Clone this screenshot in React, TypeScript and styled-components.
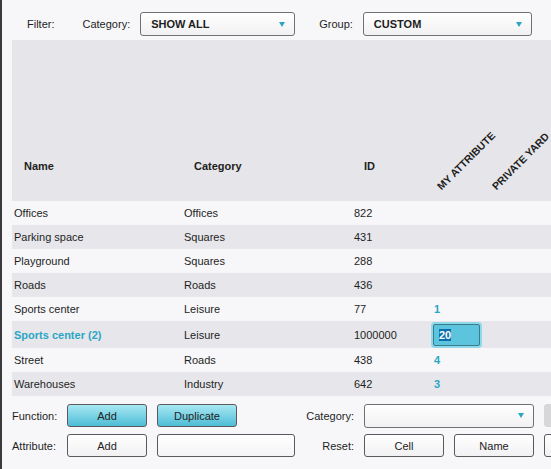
import styled, { createGlobalStyle } from "styled-components";

const GlobalStyle = createGlobalStyle`
  html, body {
    margin: 0;
    padding: 0;
    background: #f7f7f9;
    overflow: hidden;
  }
  body {
    font-family: "Liberation Sans", Arial, sans-serif;
    font-size: 11px;
    color: #1e1e1e;
  }
`;

const TEAL = "#2aa6c4";

const Frame = styled.div`
  width: 551px;
  height: 469px;
  box-sizing: border-box;
  border-left: 2px solid #3a3a3c;
  overflow: hidden;
  background: #f7f7f9;
`;

const TopBar = styled.div`
  height: 40px;
  box-sizing: border-box;
  padding: 8px 0 0 25px;
  display: flex;
  align-items: center;
`;

const Label = styled.span<{ $gap?: number; $lead?: number }>`
  margin-left: ${(p) => p.$lead ?? 0}px;
  margin-right: ${(p) => p.$gap ?? 10}px;
  white-space: nowrap;
`;

const Select = styled.div<{ $width: number }>`
  width: ${(p) => p.$width}px;
  height: 24px;
  box-sizing: border-box;
  border: 1px solid #707074;
  border-radius: 3px;
  background: linear-gradient(#ffffff, #f1f1f3);
  display: flex;
  align-items: center;
  justify-content: space-between;
  padding: 0 9px 0 10px;
  font-weight: bold;
  font-size: 11px;
`;

const Arrow = styled.span`
  width: 0;
  height: 0;
  border-left: 3.5px solid transparent;
  border-right: 3.5px solid transparent;
  border-top: 5px solid ${TEAL};
`;

const Table = styled.div`
  margin-left: 10px;
`;

const COLUMNS = "170px 170px 80px 55px 1fr";

const HeaderRow = styled.div`
  height: 161px;
  display: grid;
  grid-template-columns: ${COLUMNS};
  align-items: end;
  background: #e6e6ea;
`;

const HeadCell = styled.div`
  padding: 0 0 28px 12px;
  font-weight: bold;
  line-height: 13px;
`;

const SlantCell = styled.div`
  padding: 0 0 9px 11px;
  height: 12px;
`;

const SlantLabel = styled.span`
  display: block;
  width: 100px;
  font-size: 10.5px;
  font-weight: bold;
  line-height: 12px;
  white-space: nowrap;
  transform-origin: left bottom;
  transform: rotate(-45deg);
`;

const Row = styled.div<{ $shaded: boolean; $tall?: boolean }>`
  height: ${(p) => (p.$tall ? 27 : 24)}px;
  display: grid;
  grid-template-columns: ${COLUMNS};
  align-items: center;
  background: ${(p) => (p.$shaded ? "#e7e7eb" : "#f7f7f9")};
`;

const Cell = styled.div<{ $accent?: boolean }>`
  padding-left: 2px;
  white-space: nowrap;
  color: ${(p) => (p.$accent ? TEAL : "#1e1e1e")};
  font-weight: ${(p) => (p.$accent ? "bold" : "normal")};
`;

const EditBox = styled.div`
  width: 47px;
  height: 22px;
  margin-left: 1px;
  box-sizing: border-box;
  border: 1px solid #3b7c8c;
  border-radius: 2px;
  background: #5cc4dc;
  box-shadow: 0 0 0 2px #8dd8e9;
  display: flex;
  align-items: center;
  padding-left: 5px;
`;

const Selected = styled.span`
  background: #0b6fae;
  color: #ffffff;
  font-weight: bold;
  line-height: 12px;
`;

const Controls = styled.div`
  display: grid;
  grid-template-columns: 45px 80px 138px 49px 80px 80px 80px;
  grid-auto-rows: 23px;
  column-gap: 10px;
  row-gap: 7px;
  padding: 8px 0 0 10px;
  align-items: center;
`;

const SideLabel = styled.span<{ $right?: boolean }>`
  white-space: nowrap;
  text-align: ${(p) => (p.$right ? "right" : "left")};
`;

const Button = styled.div<{ $variant?: "teal" | "plain" | "disabled" }>`
  width: 80px;
  height: 23px;
  box-sizing: border-box;
  border-radius: 3px;
  display: flex;
  align-items: center;
  justify-content: center;
  color: #222;
  border: 1px solid
    ${(p) => (p.$variant === "disabled" ? "#d6d6d9" : "#5a5a5e")};
  background: ${(p) =>
    p.$variant === "teal"
      ? "linear-gradient(#a9e8f3, #4dbdd6)"
      : p.$variant === "disabled"
      ? "#d7d7da"
      : "linear-gradient(#ffffff, #f1f1f3)"};
`;

const TextField = styled.div`
  width: 138px;
  height: 23px;
  box-sizing: border-box;
  border: 1px solid #5a5a5e;
  border-radius: 3px;
  background: linear-gradient(#ffffff, #f4f4f6);
`;

const WideSelect = styled(Select)`
  grid-column: span 2;
`;

type Item = { name: string; category: string; id: string; value?: string; editing?: boolean };

const items: Item[] = [
  { name: "Offices", category: "Offices", id: "822" },
  { name: "Parking space", category: "Squares", id: "431" },
  { name: "Playground", category: "Squares", id: "288" },
  { name: "Roads", category: "Roads", id: "436" },
  { name: "Sports center", category: "Leisure", id: "77", value: "1" },
  { name: "Sports center (2)", category: "Leisure", id: "1000000", value: "20", editing: true },
  { name: "Street", category: "Roads", id: "438", value: "4" },
  { name: "Warehouses", category: "Industry", id: "642", value: "3" },
];

export default function App() {
  return (
    <Frame>
      <GlobalStyle />
      <TopBar>
        <Label $gap={28}>Filter:</Label>
        <Label>Category:</Label>
        <Select $width={155}>
          SHOW ALL
          <Arrow />
        </Select>
        <Label $lead={24}>Group:</Label>
        <Select $width={169}>
          CUSTOM
          <Arrow />
        </Select>
      </TopBar>

      <Table>
        <HeaderRow>
          <HeadCell>Name</HeadCell>
          <HeadCell>Category</HeadCell>
          <HeadCell>ID</HeadCell>
          <SlantCell>
            <SlantLabel>MY ATTRIBUTE</SlantLabel>
          </SlantCell>
          <SlantCell>
            <SlantLabel>PRIVATE YARD</SlantLabel>
          </SlantCell>
        </HeaderRow>
        {items.map((item, i) => (
          <Row key={item.name} $shaded={i % 2 === 1} $tall={item.editing}>
            <Cell $accent={item.editing}>{item.name}</Cell>
            <Cell>{item.category}</Cell>
            <Cell>{item.id}</Cell>
            {item.editing ? (
              <EditBox>
                <Selected>{item.value}</Selected>
              </EditBox>
            ) : (
              <Cell $accent>{item.value}</Cell>
            )}
            <Cell />
          </Row>
        ))}
      </Table>

      <Controls>
        <SideLabel>Function:</SideLabel>
        <Button $variant="teal">Add</Button>
        <Button $variant="teal">Duplicate</Button>
        <SideLabel $right>Category:</SideLabel>
        <WideSelect $width={170}>
          <span />
          <Arrow />
        </WideSelect>
        <Button $variant="disabled" />

        <SideLabel>Attribute:</SideLabel>
        <Button>Add</Button>
        <TextField />
        <SideLabel $right>Reset:</SideLabel>
        <Button>Cell</Button>
        <Button>Name</Button>
        <Button />
      </Controls>
    </Frame>
  );
}
